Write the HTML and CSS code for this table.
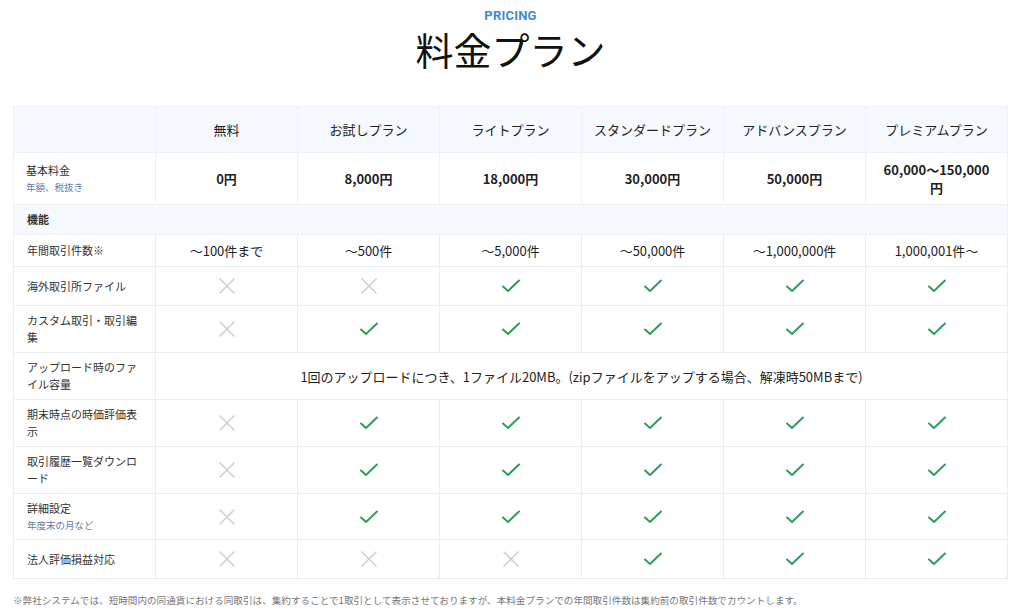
FILE: index.html
```html
<!DOCTYPE html>
<html lang="ja">
<head>
<meta charset="utf-8">
<link rel="stylesheet" href="styles.css">
</head>
<body>
<div class="page">
  <header class="head">
    <div class="eyebrow">PRICING</div>
    <h1 class="title">料金プラン</h1>
  </header>
  <table class="pricing">
    <colgroup>
      <col class="c"><col class="c"><col class="c"><col class="c"><col class="c"><col class="c"><col class="c">
    </colgroup>
    <thead>
      <tr class="hrow">
        <th class="label"></th>
        <th>無料</th>
        <th>お試しプラン</th>
        <th>ライトプラン</th>
        <th>スタンダードプラン</th>
        <th>アドバンスプラン</th>
        <th>プレミアムプラン</th>
      </tr>
    </thead>
    <tbody>
      <tr class="price">
        <td class="label">基本料金<span class="sub">年額、税抜き</span></td>
        <td>0円</td>
        <td>8,000円</td>
        <td>18,000円</td>
        <td>30,000円</td>
        <td>50,000円</td>
        <td>60,000〜150,000円</td>
      </tr>
      <tr class="section">
        <td class="label" colspan="7">機能</td>
      </tr>
      <tr>
        <td class="label">年間取引件数※</td>
        <td>〜100件まで</td>
        <td>〜500件</td>
        <td>〜5,000件</td>
        <td>〜50,000件</td>
        <td>〜1,000,000件</td>
        <td>1,000,001件〜</td>
      </tr>
      <tr>
        <td class="label">海外取引所ファイル</td>
        <td><svg class="ic no" viewBox="0 0 26 26"><path d="M6 6L20 20M20 6L6 20"/></svg></td>
        <td><svg class="ic no" viewBox="0 0 26 26"><path d="M6 6L20 20M20 6L6 20"/></svg></td>
        <td><svg class="ic yes" viewBox="0 0 26 26"><path d="M5 13.5L10 18L21 7.5"/></svg></td>
        <td><svg class="ic yes" viewBox="0 0 26 26"><path d="M5 13.5L10 18L21 7.5"/></svg></td>
        <td><svg class="ic yes" viewBox="0 0 26 26"><path d="M5 13.5L10 18L21 7.5"/></svg></td>
        <td><svg class="ic yes" viewBox="0 0 26 26"><path d="M5 13.5L10 18L21 7.5"/></svg></td>
      </tr>
      <tr>
        <td class="label">カスタム取引・取引編集</td>
        <td><svg class="ic no" viewBox="0 0 26 26"><path d="M6 6L20 20M20 6L6 20"/></svg></td>
        <td><svg class="ic yes" viewBox="0 0 26 26"><path d="M5 13.5L10 18L21 7.5"/></svg></td>
        <td><svg class="ic yes" viewBox="0 0 26 26"><path d="M5 13.5L10 18L21 7.5"/></svg></td>
        <td><svg class="ic yes" viewBox="0 0 26 26"><path d="M5 13.5L10 18L21 7.5"/></svg></td>
        <td><svg class="ic yes" viewBox="0 0 26 26"><path d="M5 13.5L10 18L21 7.5"/></svg></td>
        <td><svg class="ic yes" viewBox="0 0 26 26"><path d="M5 13.5L10 18L21 7.5"/></svg></td>
      </tr>
      <tr>
        <td class="label">アップロード時のファイル容量</td>
        <td colspan="6">1回のアップロードにつき、1ファイル20MB。(zipファイルをアップする場合、解凍時50MBまで)</td>
      </tr>
      <tr>
        <td class="label">期末時点の時価評価表示</td>
        <td><svg class="ic no" viewBox="0 0 26 26"><path d="M6 6L20 20M20 6L6 20"/></svg></td>
        <td><svg class="ic yes" viewBox="0 0 26 26"><path d="M5 13.5L10 18L21 7.5"/></svg></td>
        <td><svg class="ic yes" viewBox="0 0 26 26"><path d="M5 13.5L10 18L21 7.5"/></svg></td>
        <td><svg class="ic yes" viewBox="0 0 26 26"><path d="M5 13.5L10 18L21 7.5"/></svg></td>
        <td><svg class="ic yes" viewBox="0 0 26 26"><path d="M5 13.5L10 18L21 7.5"/></svg></td>
        <td><svg class="ic yes" viewBox="0 0 26 26"><path d="M5 13.5L10 18L21 7.5"/></svg></td>
      </tr>
      <tr>
        <td class="label">取引履歴一覧ダウンロード</td>
        <td><svg class="ic no" viewBox="0 0 26 26"><path d="M6 6L20 20M20 6L6 20"/></svg></td>
        <td><svg class="ic yes" viewBox="0 0 26 26"><path d="M5 13.5L10 18L21 7.5"/></svg></td>
        <td><svg class="ic yes" viewBox="0 0 26 26"><path d="M5 13.5L10 18L21 7.5"/></svg></td>
        <td><svg class="ic yes" viewBox="0 0 26 26"><path d="M5 13.5L10 18L21 7.5"/></svg></td>
        <td><svg class="ic yes" viewBox="0 0 26 26"><path d="M5 13.5L10 18L21 7.5"/></svg></td>
        <td><svg class="ic yes" viewBox="0 0 26 26"><path d="M5 13.5L10 18L21 7.5"/></svg></td>
      </tr>
      <tr>
        <td class="label">詳細設定<span class="sub">年度末の月など</span></td>
        <td><svg class="ic no" viewBox="0 0 26 26"><path d="M6 6L20 20M20 6L6 20"/></svg></td>
        <td><svg class="ic yes" viewBox="0 0 26 26"><path d="M5 13.5L10 18L21 7.5"/></svg></td>
        <td><svg class="ic yes" viewBox="0 0 26 26"><path d="M5 13.5L10 18L21 7.5"/></svg></td>
        <td><svg class="ic yes" viewBox="0 0 26 26"><path d="M5 13.5L10 18L21 7.5"/></svg></td>
        <td><svg class="ic yes" viewBox="0 0 26 26"><path d="M5 13.5L10 18L21 7.5"/></svg></td>
        <td><svg class="ic yes" viewBox="0 0 26 26"><path d="M5 13.5L10 18L21 7.5"/></svg></td>
      </tr>
      <tr>
        <td class="label">法人評価損益対応</td>
        <td><svg class="ic no" viewBox="0 0 26 26"><path d="M6 6L20 20M20 6L6 20"/></svg></td>
        <td><svg class="ic no" viewBox="0 0 26 26"><path d="M6 6L20 20M20 6L6 20"/></svg></td>
        <td><svg class="ic no" viewBox="0 0 26 26"><path d="M6 6L20 20M20 6L6 20"/></svg></td>
        <td><svg class="ic yes" viewBox="0 0 26 26"><path d="M5 13.5L10 18L21 7.5"/></svg></td>
        <td><svg class="ic yes" viewBox="0 0 26 26"><path d="M5 13.5L10 18L21 7.5"/></svg></td>
        <td><svg class="ic yes" viewBox="0 0 26 26"><path d="M5 13.5L10 18L21 7.5"/></svg></td>
      </tr>
    </tbody>
  </table>
  <p class="note">※弊社システムでは、短時間内の同通貨における同取引は、集約することで1取引として表示させておりますが、本料金プランでの年間取引件数は集約前の取引件数でカウントします。</p>
</div>
</body>
</html>
```

FILE: styles.css
```css
* { box-sizing: border-box; }
html, body { margin: 0; padding: 0; background: #fff; }
body {
  font-family: "Noto Sans CJK JP", "Noto Sans", sans-serif;
  color: #222;
}
.page {
  width: 1024px;
  padding: 8px 16px 0 13px;
}
.head { text-align: center; }
.eyebrow {
  font-family: Roboto, "Noto Sans", sans-serif;
  font-weight: 700;
  font-size: 13px;
  line-height: 16px;
  color: #3d8ad6;
  letter-spacing: 0.2px;
}
.title {
  margin: 0;
  font-size: 38px;
  font-weight: 400;
  line-height: 50px;
  color: #111;
}
.pricing {
  margin-top: 32px;
  width: 995px;
  table-layout: fixed;
  border-collapse: collapse;
  border: 1px solid #e6ebf2;
}
.pricing col.c { width: 142px; }
.pricing th,
.pricing td {
  border: 1px solid #e9eef4;
  padding: 6px 12px;
  text-align: center;
  vertical-align: middle;
  font-size: 13px;
  line-height: 19px;
  color: #222;
}
.pricing th {
  font-weight: 400;
  background: #f5f8fc;
  padding: 13px 8px;
}
.pricing th,
.pricing .price td,
.pricing .section td { border-color: #edf1f6; }
.pricing .label {
  text-align: left;
  font-size: 11px;
  line-height: 17px;
  padding: 6px 13px;
  color: #333;
}
.pricing .sub {
  display: block;
  font-size: 9.5px;
  line-height: 16px;
  color: #5f7ba6;
}
.pricing .price td {
  padding: 8px 12px;
  font-weight: 700;
  line-height: 17.5px;
}
.pricing .price td.label { font-weight: 400; }
.pricing .section td {
  background: #f5f8fc;
  font-weight: 700;
  padding: 6px 13px;
}
.ic {
  display: block;
  width: 26px;
  height: 26px;
  margin: 0 auto;
  fill: none;
  stroke-linecap: round;
  stroke-linejoin: round;
}
.ic.no { stroke: #c9d1dc; stroke-width: 1.6; }
.ic.yes { stroke: #2f9e5c; stroke-width: 2; }
.note {
  margin: 13px 0 0;
  font-size: 9.6px;
  line-height: 16px;
  color: #777;
}
```
